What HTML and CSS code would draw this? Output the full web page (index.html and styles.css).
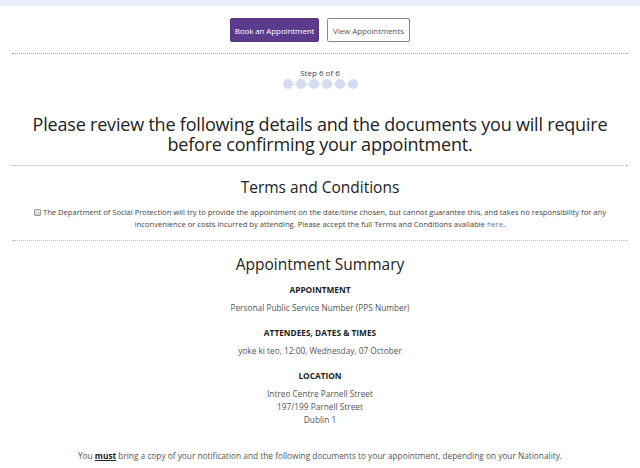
FILE: index.html
```html
<!DOCTYPE html>
<html lang="en">
<head>
<meta charset="utf-8">
<title>Book an Appointment - Review</title>
<link rel="stylesheet" href="styles.css">
</head>
<body>
<div class="topband"></div>
<nav class="actions">
  <a class="btn btn-primary" href="#">Book an Appointment</a>
  <a class="btn btn-outline" href="#">View Appointments</a>
</nav>
<hr class="rule rule-blue">
<div class="steps">
  <div class="steps-label">Step 6 of 6</div>
  <div class="steps-dots">
    <span class="dot"></span><span class="dot"></span><span class="dot"></span><span class="dot"></span><span class="dot"></span><span class="dot"></span>
  </div>
</div>
<h1 class="intro">Please review the following details and the documents you will require<br>before confirming your appointment.</h1>
<hr class="rule rule-grey">
<h2 class="section-title terms-title">Terms and Conditions</h2>
<p class="terms"><span class="checkbox"></span> The Department of Social Protection will try to provide the appointment on the date/time chosen, but cannot guarantee this, and takes no responsibility for any inconvenience or costs incurred by attending. Please accept the full Terms and Conditions available <a href="#">here</a>.</p>
<hr class="rule rule-grey">
<h2 class="section-title summary-title">Appointment Summary</h2>
<section class="summary">
  <h3 class="label">APPOINTMENT</h3>
  <p class="value">Personal Public Service Number (PPS Number)</p>
  <h3 class="label">ATTENDEES, DATES &amp; TIMES</h3>
  <p class="value">yoke ki teo, 12:00, Wednesday, 07 October</p>
  <h3 class="label">LOCATION</h3>
  <p class="value address">Intreo Centre Parnell Street<br>197/199 Parnell Street<br>Dublin 1</p>
</section>
<p class="notice">You <strong>must</strong> bring a copy of your notification and the following documents to your appointment, depending on your Nationality.</p>
</body>
</html>
```
FILE: styles.css
```css
* { box-sizing: border-box; }
html, body { margin: 0; padding: 0; background: #fff; }
body {
  font-family: "Open Sans", "DejaVu Sans", sans-serif;
  color: #333;
  width: 640px;
  overflow: hidden;
}
.topband { height: 6px; background: #eceef8; }
.actions {
  display: flex;
  justify-content: center;
  gap: 8px;
  padding-top: 12px;
  height: 42px;
}
.btn {
  display: flex;
  align-items: center;
  justify-content: center;
  height: 24px;
  border-radius: 2px;
  font-size: 8px;
  text-decoration: none;
  letter-spacing: -0.1px;
}
.btn-primary {
  width: 89px;
  background: #5b3b8c;
  color: #fff;
  border: 1px solid #52347f;
}
.btn-outline {
  width: 83px;
  background: #fff;
  color: #555;
  border: 1px solid #888;
}
.rule {
  margin: 0 12px;
  border: 0;
  height: 0;
}
.rule-blue { border-top: 1px dotted #8f9bd6; margin-top: 5px; }
.rule-grey { border-top: 1px dotted #b5b5c5; }
.steps {
  display: flex;
  flex-direction: column;
  align-items: center;
  padding-top: 14px;
}
.steps-label { font-size: 8px; line-height: 10px; color: #444; }
.steps-dots {
  position: relative;
  display: flex;
  gap: 3px;
  margin-top: 1px;
}
.steps-dots::before {
  content: "";
  position: absolute;
  left: 4px; right: 4px; top: 4.5px;
  height: 1px;
  background: #d2dbf0;
}
.dot {
  position: relative;
  width: 10px; height: 10px;
  border-radius: 50%;
  background: #d2dbf0;
}
.intro {
  margin: 25px 0 11px;
  font-size: 18px;
  line-height: 20px;
  font-weight: 400;
  text-align: center;
  color: #222;
  letter-spacing: -0.2px;
}
.section-title {
  margin: 0;
  font-weight: 400;
  text-align: center;
  font-size: 15.5px;
  line-height: 20px;
  color: #222;
}
.terms-title { margin-top: 11px; }
.terms {
  margin: 9px 34px 0;
  font-size: 7.6px;
  line-height: 12px;
  text-align: center;
  color: #444;
  padding-bottom: 10px;
}
.terms a { color: #4a7fb5; text-decoration: none; }
.checkbox {
  display: inline-block;
  width: 7px; height: 7px;
  border: 1px solid #999;
  background: linear-gradient(#eee, #ccc);
  vertical-align: -1px;
  border-radius: 1px;
}
.summary-title { margin-top: 13px; }
.summary { text-align: center; padding-top: 10px; }
.label {
  margin: 0;
  font-size: 8.3px;
  line-height: 12px;
  font-weight: 700;
  color: #222;
}
.value {
  margin: 5px 0 13px;
  font-size: 8.3px;
  line-height: 13px;
  color: #555;
}
.address { margin-bottom: 0; }
.notice {
  margin: 23px 0 0;
  text-align: center;
  font-size: 8.3px;
  line-height: 13px;
  color: #555;
}
.notice strong { color: #222; text-decoration: underline; }
```
